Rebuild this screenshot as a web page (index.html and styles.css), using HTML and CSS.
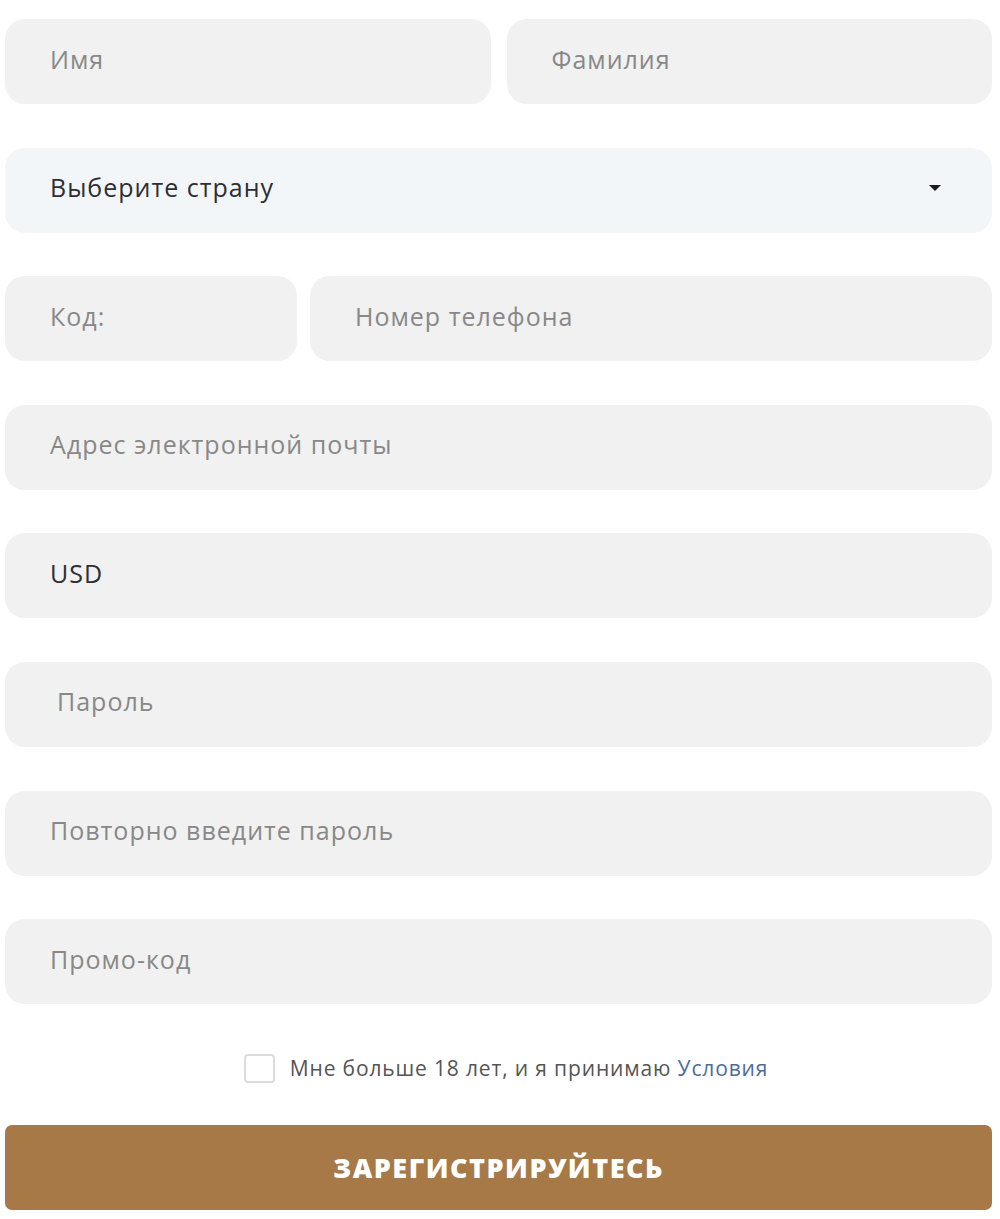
FILE: index.html
```html
<!DOCTYPE html>
<html lang="ru">
<head>
<meta charset="utf-8">
<title>Регистрация</title>
<link rel="stylesheet" href="styles.css">
</head>
<body>
<form class="form">
  <div class="fields">
    <div class="row">
      <div class="field grow"><span class="ph">Имя</span></div>
      <div class="field grow"><span class="ph">Фамилия</span></div>
    </div>
    <div class="field select">
      <span class="val">Выберите страну</span>
      <svg class="caret" width="14" height="8" viewBox="0 0 14 8"><path d="M1 1 H13 L7 7 Z" fill="#1a1a1a"/></svg>
    </div>
    <div class="row">
      <div class="field code"><span class="ph">Код:</span></div>
      <div class="field grow"><span class="ph">Номер телефона</span></div>
    </div>
    <div class="field"><span class="ph">Адрес электронной почты</span></div>
    <div class="field"><span class="val">USD</span></div>
    <div class="field indent"><span class="ph">Пароль</span></div>
    <div class="field"><span class="ph">Повторно введите пароль</span></div>
    <div class="field"><span class="ph">Промо-код</span></div>
  </div>
  <label class="terms">
    <span class="box"></span>
    <span class="terms-text">Мне больше 18 лет, и я принимаю <span class="link">Условия</span></span>
  </label>
  <button type="button" class="btn">ЗАРЕГИСТРИРУЙТЕСЬ</button>
</form>
</body>
</html>
```
FILE: styles.css
```css
* { box-sizing: border-box; }
html, body { margin: 0; padding: 0; background: #fff; }
body { font-family: "Open Sans", "Noto Sans", sans-serif; }
.form {
  width: 992px;
  padding: 19px 0 0 5px;
}
.fields {
  display: flex;
  flex-direction: column;
  gap: 43.6px;
}
.row {
  display: flex;
  gap: 16px;
}
.row .code { width: 292px; flex: none; }
.row .code + .grow { margin-left: -3px; }
.grow { flex: 1; }
.field {
  height: 85px;
  border-radius: 20px;
  background: #f1f1f1;
  display: flex;
  align-items: center;
  padding: 0 45px 6px;
  font-size: 25px;
  letter-spacing: 1px;
}
.field.indent { padding-left: 52px; }
.ph { color: #888; }
.val { color: #2e2e33; }
.select {
  background: #f3f6f9;
  justify-content: space-between;
  padding-right: 50px;
}
.caret { display: block; margin-top: 2px; }
.terms {
  display: flex;
  align-items: center;
  justify-content: center;
  gap: 15px;
  margin-top: 49px;
  height: 30px;
  font-size: 21px;
  letter-spacing: 0.85px;
  color: #555;
}
.box {
  width: 31px;
  height: 29px;
  border: 2px solid #dcdcdc;
  border-radius: 4px;
  background: #fff;
  margin-left: 15px;
}
.link { color: #4d6c9c; }
.btn {
  display: block;
  width: 987px;
  height: 85px;
  margin-top: 42px;
  border: 0;
  border-radius: 7px;
  background: #a67947;
  color: #fff;
  font-family: "Open Sans", "Noto Sans", sans-serif;
  font-weight: 800;
  font-size: 27px;
  letter-spacing: 1.5px;
}
```
